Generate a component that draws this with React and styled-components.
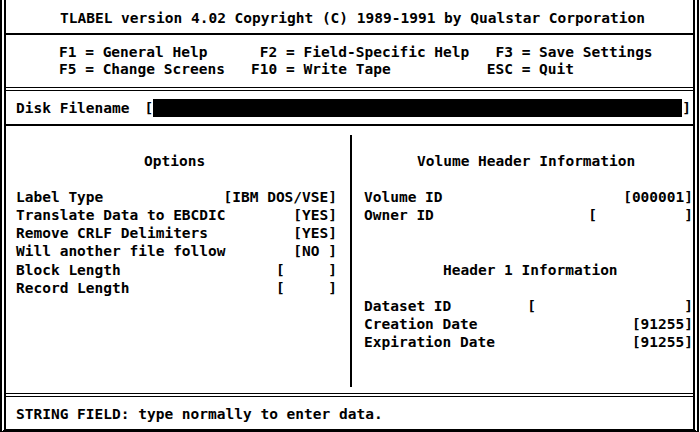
import React from "react";
import styled, { createGlobalStyle } from "styled-components";

const GlobalStyle = createGlobalStyle`
  html, body {
    margin: 0;
    padding: 0;
    background: #fff;
  }
  body {
    font-family: "DejaVu Sans Mono", "Liberation Mono", monospace;
    font-weight: bold;
    font-size: 14.5px;
    color: #000;
  }
`;

const Screen = styled.div`
  width: 699px;
  height: 432px;
  box-sizing: border-box;
  border-left: 6px double #000;
  border-right: 6px double #000;
  border-bottom: 3px solid #000;
  display: flex;
  flex-direction: column;
`;

const TitleBar = styled.div`
  height: 33px;
  box-sizing: border-box;
  display: flex;
  align-items: center;
  padding: 2px 0 0 54px;
  white-space: pre;
`;

const HelpBlock = styled.div`
  height: 54px;
  box-sizing: border-box;
  border-top: 2px solid #000;
  padding: 9px 0 0 53px;
`;

const HelpGrid = styled.div`
  display: grid;
  grid-template-columns: 2ch 20ch 3ch 24ch 3ch auto;
  line-height: 17px;
  white-space: pre;
`;

const HelpKey = styled.span`
  text-align: right;
`;

const HelpText = styled.span`
  padding-left: 1ch;
`;

const DiskRow = styled.div`
  height: 39px;
  box-sizing: border-box;
  border-top: 4px double #000;
  border-bottom: 2px solid #000;
  display: flex;
  align-items: center;
  padding-left: 10px;
`;

const Bracket = styled.span`
  white-space: pre;
  padding-top: 1px;
`;

const DiskLabel = styled.span`
  margin-right: 15px;
  padding-top: 1px;
`;

const InputBar = styled.div`
  width: 529px;
  height: 18px;
  background: #000;
`;

const Panels = styled.div`
  flex: 1;
  display: flex;
  min-height: 0;
`;

const Panel = styled.div`
  width: ${(p) => p.$width}px;
  box-sizing: border-box;
  padding: 26px ${(p) => p.$right}px 0 ${(p) => p.$left}px;
  line-height: 18.1px;
`;

const Divider = styled.div`
  width: 2px;
  background: #000;
  margin: 9px 0 6px;
`;

const Section = styled.div`
  & + & {
    margin-top: 36.2px;
  }
`;

const Heading = styled.div`
  padding-left: ${(p) => p.$indent}px;
  margin-bottom: 18.1px;
  white-space: pre;
`;

const FieldRow = styled.div`
  display: flex;
  justify-content: space-between;
  white-space: pre;
`;

const StatusBar = styled.div`
  flex: none;
  height: 36px;
  box-sizing: border-box;
  border-top: 4px double #000;
  display: flex;
  align-items: center;
  padding: 1px 0 0 10px;
  white-space: pre;
`;

const help = [
  ["F1", "General Help", "F2", "Field-Specific Help", "F3", "Save Settings"],
  ["F5", "Change Screens", "F10", "Write Tape", "ESC", "Quit"],
];

const options = [
  ["Label Type", "[IBM DOS/VSE]"],
  ["Translate Data to EBCDIC", "[YES]"],
  ["Remove CRLF Delimiters", "[YES]"],
  ["Will another file follow", "[NO ]"],
  ["Block Length", "[     ]"],
  ["Record Length", "[     ]"],
];

const volumeHeader = [
  ["Volume ID", "[000001]"],
  ["Owner ID", "[          ]"],
];

const header1 = [
  ["Dataset ID", "[                 ]"],
  ["Creation Date", "[91255]"],
  ["Expiration Date", "[91255]"],
];

function Fields({ rows }) {
  return rows.map(([label, value]) => (
    <FieldRow key={label}>
      <span>{label}</span>
      <span>{value}</span>
    </FieldRow>
  ));
}

export default function App() {
  return (
    <>
      <GlobalStyle />
      <Screen>
        <TitleBar>
          TLABEL version 4.02 Copyright (C) 1989-1991 by Qualstar Corporation
        </TitleBar>

        <HelpBlock>
          <HelpGrid>
            {help.map((row) =>
              [0, 2, 4].map((i) => (
                <React.Fragment key={row[i]}>
                  <HelpKey>{row[i]}</HelpKey>
                  <HelpText>= {row[i + 1]}</HelpText>
                </React.Fragment>
              ))
            )}
          </HelpGrid>
        </HelpBlock>

        <DiskRow>
          <DiskLabel>Disk Filename</DiskLabel>
          <Bracket>[</Bracket>
          <InputBar />
          <Bracket>]</Bracket>
        </DiskRow>

        <Panels>
          <Panel $width={344} $left={10} $right={13}>
            <Section>
              <Heading $indent={128}>Options</Heading>
              <Fields rows={options} />
            </Section>
          </Panel>
          <Divider />
          <Panel $width={341} $left={12} $right={0}>
            <Section>
              <Heading $indent={53}>Volume Header Information</Heading>
              <Fields rows={volumeHeader} />
            </Section>
            <Section>
              <Heading $indent={79}>Header 1 Information</Heading>
              <Fields rows={header1} />
            </Section>
          </Panel>
        </Panels>

        <StatusBar>STRING FIELD: type normally to enter data.</StatusBar>
      </Screen>
    </>
  );
}
